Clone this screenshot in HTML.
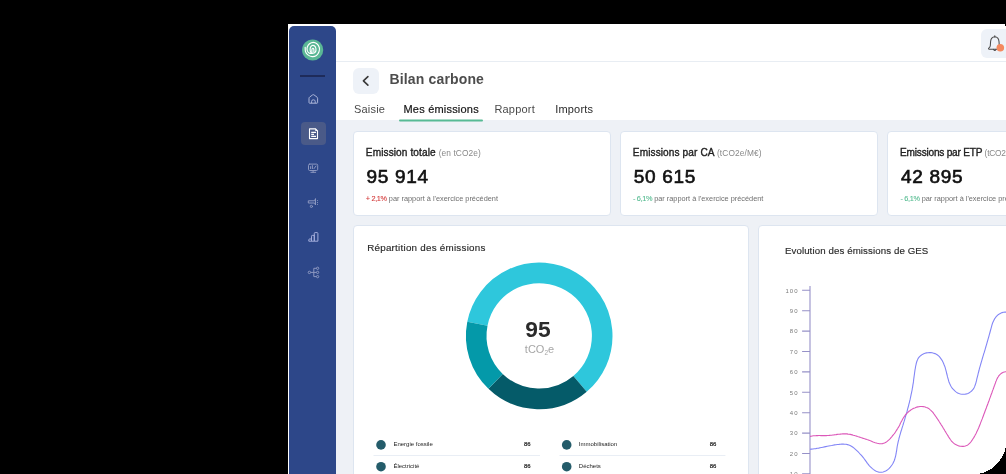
<!DOCTYPE html>
<html><head><meta charset="utf-8">
<style>
*{margin:0;padding:0;box-sizing:border-box}
html,body{width:1006px;height:474px;overflow:hidden;background:#000;font-family:"Liberation Sans",sans-serif;position:relative}
.a{position:absolute}
.t{position:absolute;white-space:nowrap;line-height:1}
#panel{left:288px;top:24px;width:718px;height:450px;background:#fff}
#sidebar{left:289px;top:26px;width:47px;height:470px;background:#2d4789;border-radius:5px}
#content{left:336px;top:120px;width:670px;height:354px;background:#eef1f6}
#topline{left:336px;top:61px;width:670px;height:1px;background:#e8edf3}
.card{position:absolute;background:#fff;border:1px solid #dde5f0;border-radius:4px}

.tab{font-size:11px;color:#4a4a4a;letter-spacing:0.2px}
.ct{font-size:10.1px;color:#222;letter-spacing:0.1px;-webkit-text-stroke:0.35px #222}
.cu{font-size:8.35px;color:#888;-webkit-text-stroke:0}
.num{font-size:19px;color:#111;letter-spacing:0.7px;-webkit-text-stroke:0.65px #111}
.sub{font-size:7.35px;color:#6e6e6e}
.lg{font-size:6px;color:#1e1e1e}
.ax{font-size:6px;color:#7a7a7a;letter-spacing:1px;text-align:right;width:20px}
</style></head><body><div style="position:absolute;left:0;top:0;width:1006px;height:474px;will-change:transform">
<div id="panel" class="a"></div>
<div id="sidebar" class="a"></div>
<div id="topline" class="a"></div>
<div id="content" class="a"></div>

<!-- sidebar icons -->
<svg class="a" style="left:288px;top:24px" width="50" height="270" viewBox="288 24 50 270">
  <circle cx="312.65" cy="50" r="10.6" fill="#5ab795"/>
  <g fill="none" stroke="#fff" stroke-width="1.15" stroke-linecap="round">
    <path d="M305.2 47.3C305.2 48.0 305.1 50.4 305.5 51.7C305.9 53.0 306.8 54.1 307.9 54.9C309.0 55.7 310.7 56.5 312.1 56.6C313.5 56.7 315.2 56.3 316.4 55.5C317.5 54.7 318.5 53.0 319.0 51.7C319.5 50.4 319.7 48.8 319.3 47.5C318.9 46.2 317.9 44.6 316.9 43.8C315.9 42.9 314.4 42.4 313.2 42.4C312.0 42.4 310.5 43.0 309.5 43.8C308.5 44.6 307.7 45.9 307.3 47.0C306.9 48.1 307.0 49.7 307.3 50.7C307.6 51.7 308.2 52.5 309.0 52.9C309.8 53.3 311.1 53.5 312.1 53.4C313.2 53.3 314.7 53.0 315.3 52.2C315.9 51.4 316.1 49.6 315.9 48.5C315.7 47.4 314.9 46.3 314.3 45.8C313.7 45.3 312.8 45.2 312.1 45.5C311.5 45.8 310.7 46.6 310.4 47.5C310.1 48.4 310.1 49.9 310.2 50.7C310.3 51.6 311.0 52.3 311.2 52.6"/>
    <path d="M311.9 52.5C311.9 52.0 311.8 50.2 311.9 49.5C312.0 48.8 312.5 48.2 312.8 48.2C313.1 48.2 313.6 48.6 313.8 49.2C314.0 49.8 313.9 51.4 313.9 51.8"/>
  </g>
  <rect x="300" y="75" width="25" height="2" fill="#1e2b5a"/>
  <!-- home -->
  <g fill="none" stroke="#aab4d8" stroke-width="1" stroke-linejoin="round">
    <path d="M309 102.6 V98.2 Q309 97.6 309.6 97.1 L312.6 94.9 Q313.3 94.4 314 94.9 L317 97.1 Q317.6 97.6 317.6 98.2 V102.6 Q317.6 103.2 317 103.2 H309.6 Q309 103.2 309 102.6 Z"/>
    <path d="M311.6 103.2 V101.3 Q311.6 99.8 313.4 99.8 Q315.2 99.8 315.2 101.3 V103.2"/>
  </g>
  <!-- doc highlight -->
  <rect x="301" y="122" width="25" height="23" rx="4" fill="#4a5a88"/>
  <g fill="none" stroke="#fff" stroke-width="1.1" stroke-linejoin="round">
    <path d="M309.5 128.9 H315.6 L317.5 130.8 V138.6 H309.5 Z"/>
    <path d="M311.2 132.4 H316 M311.2 134.4 H314 M311.2 136.4 H316"/>
  </g>
  <path d="M315.3 128.6 L317.8 131.1 H315.3 Z" fill="#fff"/>
  <!-- monitor -->
  <g fill="none" stroke="#8c98c0" stroke-width="1" stroke-linejoin="round" stroke-linecap="round">
    <rect x="308.5" y="164.1" width="9.2" height="6.4" rx="1.2"/>
    <path d="M313.1 170.5 V172.3 M310.9 172.3 H315.7"/>
    <path d="M310.6 168.6 V166.6 M312.4 168.6 V165.6 M314 168.6 L316 166"/>
  </g>
  <!-- megaphone -->
  <g fill="none" stroke="#8c98c0" stroke-width="1" stroke-linejoin="round" stroke-linecap="round">
    <path d="M308.7 200.8 H314.6 L315.5 198.6 V205 L314.6 203 H308.7 Z"/>
    <circle cx="311.4" cy="206.4" r="1.1"/>
    <path d="M317.5 200.6 V200.7 M317.5 202.5 V202.6 M317.5 204.3 V204.4"/>
  </g>
  <!-- chart -->
  <g fill="none" stroke="#a3addb" stroke-width="1" stroke-linejoin="round">
    <path d="M308.8 241.2 V239.8 Q308.8 239 309.6 239 H311.5 V241.2 Z M311.5 241.2 V236.2 Q311.5 235.4 312.3 235.4 H314.3 V241.2 Z M314.3 241.2 V233.4 Q314.3 232.6 315.1 232.6 H317.1 Q317.9 232.6 317.9 233.4 V241.2 Z"/>
  </g>
  <!-- hierarchy -->
  <g fill="none" stroke="#8c98c0" stroke-width="1">
    <circle cx="309.4" cy="272.4" r="1.2"/>
    <circle cx="317.6" cy="268.3" r="1.15"/>
    <circle cx="317.6" cy="272.4" r="1.15"/>
    <circle cx="317.6" cy="276.6" r="1.15"/>
    <path d="M310.6 272.4 H316.4 M313.8 268.3 V276.6 M313.8 268.3 H316.4 M313.8 276.6 H316.4"/>
  </g>
</svg>

<!-- bell button -->
<div class="a" style="left:981px;top:29px;width:32px;height:28.5px;background:#eef2f8;border-radius:6px"></div>
<svg class="a" style="left:980px;top:30px" width="26" height="26" viewBox="980 30 26 26">
  <g fill="none" stroke="#4a4a4a" stroke-width="1.05" stroke-linejoin="round" stroke-linecap="round">
    <path d="M994.8 36.8 C992.2 37 990.8 39 990.6 41.5 L990.3 45.8 C990.2 46.9 989.6 47.6 988.8 48.1 C988.3 48.5 988.5 49.2 989.2 49.2 L1000.4 49.2 C1001.1 49.2 1001.3 48.5 1000.8 48.1 C1000 47.6 999.4 46.9 999.3 45.8 L999 41.5 C998.8 39 997.4 37 994.8 36.8 Z"/>
    <path d="M993.6 49.4 Q994.8 51.6 996 49.4"/>
    <path d="M994.8 35.7 V36.8"/>
  </g>
  <circle cx="1000.3" cy="47.7" r="3.8" fill="#f4895f"/>
</svg>

<!-- header -->
<div class="a" style="left:353px;top:68px;width:25.5px;height:25.5px;background:#eef2f8;border-radius:6px"></div>
<svg class="a" style="left:353px;top:68px" width="26" height="26" viewBox="353 68 26 26">
  <path d="M367.9 76.6 L363.4 80.8 L367.9 85.1" fill="none" stroke="#383838" stroke-width="1.6" stroke-linecap="round" stroke-linejoin="round"/>
</svg>
<div class="t" style="left:389.5px;top:72.4px;font-size:14px;font-weight:bold;color:#4d4d4d;letter-spacing:0.15px">Bilan carbone</div>
<div class="t tab" style="left:354px;top:103.9px">Saisie</div>
<div class="t tab" style="left:403.5px;top:103.9px;color:#151515;-webkit-text-stroke:0.2px #151515">Mes émissions</div>
<div class="t tab" style="left:494.4px;top:103.9px">Rapport</div>
<div class="t tab" style="left:555.2px;top:103.9px;color:#2a2a2a">Imports</div>
<svg class="a" style="left:396px;top:116px" width="90" height="8" viewBox="396 116 90 8"><rect x="399" y="119.6" width="84" height="2" rx="1" fill="#57ba94"/></svg>

<!-- KPI cards -->
<div class="card" style="left:353px;top:131px;width:257.5px;height:84.5px"></div>
<div class="card" style="left:620px;top:131px;width:258px;height:84.5px"></div>
<div class="card" style="left:887px;top:131px;width:258px;height:84.5px"></div>

<div class="t ct" style="left:365.8px;top:148px">Emission totale <span class="cu">(en tCO2e)</span></div>
<div class="t num" style="left:366.5px;top:166.8px">95 914</div>
<div class="t sub" style="left:365.8px;top:195.3px"><span style="color:#d43a3a;letter-spacing:-0.35px;-webkit-text-stroke:0.1px #d43a3a">+ 2,1%</span> par rapport à l'exercice précédent</div>

<div class="t ct" style="left:632.8px;top:148px">Emissions par CA <span class="cu">(tCO2e/M€)</span></div>
<div class="t num" style="left:633.8px;top:166.8px">50 615</div>
<div class="t sub" style="left:633px;top:195.3px"><span style="color:#55bb90;letter-spacing:-0.35px;-webkit-text-stroke:0.1px #55bb90">- 6,1%</span> par rapport à l'exercice précédent</div>

<div class="t ct" style="left:900.1px;top:148px;letter-spacing:-0.22px">Emissions par ETP <span class="cu">(tCO2e/ETP)</span></div>
<div class="t num" style="left:901px;top:166.8px">42 895</div>
<div class="t sub" style="left:900.5px;top:195.3px"><span style="color:#55bb90;letter-spacing:-0.35px;-webkit-text-stroke:0.1px #55bb90">- 6,1%</span> par rapport à l'exercice précédent</div>

<!-- bottom panels -->
<div class="card" style="left:353px;top:225px;width:396px;height:260px"></div>
<div class="card" style="left:758px;top:225px;width:396px;height:260px"></div>

<div class="t" style="left:367.2px;top:243.3px;font-size:9.8px;letter-spacing:0.25px;color:#2a2a2a;-webkit-text-stroke:0.15px #2a2a2a">Répartition des émissions</div>

<svg class="a" style="left:0;top:0" width="1006" height="474" viewBox="0 0 1006 474">
  <g fill="none" stroke-width="20.6">
    <path d="M477.40 323.66A63 63 0 1 1 580.03 383.88" stroke="#2ec7dc"/>
    <path d="M580.03 383.88A63 63 0 0 1 495.59 381.37" stroke="#055b69"/>
    <path d="M495.59 381.37A63 63 0 0 1 477.40 323.66" stroke="#0499a9"/>
  </g>
</svg>
<div class="t" style="left:512px;top:318.3px;width:52px;text-align:center;font-size:22.8px;font-weight:bold;color:#2b2b2b">95</div>
<div class="t" style="left:509.5px;top:344.2px;width:60px;text-align:center;font-size:11px;color:#a6a6a6">tCO<sub style="font-size:6.5px;vertical-align:-1.5px">2</sub>e</div>

<!-- legend -->
<svg class="a" style="left:0;top:0" width="1006" height="474" viewBox="0 0 1006 474">
  <g fill="#245c6a">
    <circle cx="381" cy="444.9" r="4.8"/>
    <circle cx="381" cy="466.7" r="4.8"/>
    <circle cx="566.7" cy="444.9" r="4.8"/>
    <circle cx="566.7" cy="466.7" r="4.8"/>
  </g>
  <rect x="373.5" y="455" width="166.5" height="1" fill="#e9eef5"/>
  <rect x="559.4" y="455" width="166" height="1" fill="#e9eef5"/>
</svg>
<div class="t lg" style="left:393.4px;top:441.1px">Energie fossile</div>
<div class="t lg" style="left:524px;top:441.1px;-webkit-text-stroke:0.2px #222">86</div>
<div class="t lg" style="left:393.4px;top:462.9px">Électricité</div>
<div class="t lg" style="left:524px;top:462.9px;-webkit-text-stroke:0.2px #222">86</div>
<div class="t lg" style="left:578.8px;top:441.1px">Immobilisation</div>
<div class="t lg" style="left:709.7px;top:441.1px;-webkit-text-stroke:0.2px #222">86</div>
<div class="t lg" style="left:578.8px;top:462.9px">Déchets</div>
<div class="t lg" style="left:709.7px;top:462.9px;-webkit-text-stroke:0.2px #222">86</div>

<!-- line chart -->
<div class="t" style="left:784.9px;top:246.1px;font-size:9.7px;letter-spacing:0.1px;color:#2a2a2a;-webkit-text-stroke:0.15px #2a2a2a">Evolution des émissions de GES</div>
<svg class="a" style="left:0;top:0" width="1006" height="474" viewBox="0 0 1006 474">
  <g stroke="#9691c8" stroke-width="1.1" fill="none">
    <path d="M810 286 L810 474"/>
    <path d="M802.1 290.3 H810 M802.1 310.7 H810 M802.1 331.1 H810 M802.1 351.5 H810 M802.1 371.9 H810 M802.1 392.3 H810 M802.1 412.7 H810 M802.1 433.1 H810 M802.1 453.5 H810 M802.1 473.9 H810"/>
  </g>
  <path id="blue" d="M810.0 449.3 L811.5 449.1 L812.9 449.0 L814.3 448.8 L815.8 448.6 L817.2 448.3 L818.7 448.1 L820.1 447.8 L821.5 447.5 L823.0 447.2 L824.4 446.9 L825.8 446.6 L827.3 446.3 L828.7 446.0 L830.1 445.7 L831.6 445.5 L833.0 445.2 L834.5 444.9 L835.9 444.7 L837.4 444.5 L838.9 444.4 L840.3 444.2 L841.8 444.1 L843.2 444.1 L844.7 444.2 L846.1 444.3 L847.5 444.6 L848.8 445.0 L850.1 445.5 L851.4 446.2 L852.6 447.0 L853.8 447.9 L854.9 448.9 L856.0 449.9 L857.1 450.9 L858.2 451.9 L859.2 453.0 L860.2 454.1 L861.2 455.1 L862.1 456.2 L863.1 457.4 L864.0 458.5 L864.8 459.7 L865.7 460.9 L866.6 462.1 L867.4 463.3 L868.3 464.4 L869.2 465.6 L870.2 466.7 L871.3 467.7 L872.4 468.7 L873.6 469.6 L874.9 470.5 L876.2 471.2 L877.6 471.7 L879.0 472.1 L880.4 472.3 L881.8 472.3 L883.1 472.0 L884.4 471.6 L885.7 471.0 L886.9 470.3 L888.1 469.4 L889.2 468.4 L890.3 467.2 L891.2 466.0 L892.1 464.8 L892.9 463.5 L893.6 462.1 L894.2 460.7 L894.7 459.3 L895.1 457.9 L895.5 456.5 L895.8 455.1 L896.1 453.7 L896.3 452.2 L896.6 450.8 L896.8 449.3 L897.0 447.9 L897.2 446.5 L897.5 445.0 L897.8 443.6 L898.1 442.2 L898.4 440.8 L898.8 439.4 L899.1 438.0 L899.5 436.6 L899.9 435.2 L900.3 433.8 L900.7 432.4 L901.1 431.0 L901.6 429.6 L902.0 428.2 L902.4 426.8 L902.9 425.4 L903.3 424.0 L903.7 422.6 L904.2 421.2 L904.6 419.8 L905.0 418.3 L905.4 416.9 L905.8 415.5 L906.3 414.1 L906.7 412.7 L907.1 411.3 L907.4 409.9 L907.8 408.4 L908.2 407.0 L908.6 405.6 L908.9 404.2 L909.3 402.8 L909.6 401.3 L910.0 399.9 L910.3 398.5 L910.6 397.1 L910.9 395.6 L911.2 394.2 L911.5 392.8 L911.8 391.4 L912.1 390.0 L912.3 388.5 L912.6 387.1 L912.8 385.7 L913.0 384.3 L913.3 382.8 L913.5 381.4 L913.6 380.0 L913.8 378.6 L914.0 377.2 L914.2 375.7 L914.4 374.3 L914.6 372.8 L914.8 371.4 L915.0 369.9 L915.3 368.5 L915.5 367.0 L915.8 365.5 L916.2 364.0 L916.5 362.5 L917.0 361.0 L917.6 359.6 L918.2 358.3 L919.1 357.1 L920.1 356.1 L921.2 355.2 L922.4 354.4 L923.7 353.8 L925.0 353.3 L926.4 352.9 L927.9 352.7 L929.3 352.6 L930.8 352.6 L932.2 352.8 L933.6 353.2 L935.0 353.6 L936.3 354.3 L937.5 355.0 L938.6 355.9 L939.6 356.9 L940.5 358.1 L941.4 359.3 L942.2 360.6 L942.9 361.9 L943.5 363.3 L944.1 364.8 L944.7 366.2 L945.2 367.7 L945.6 369.2 L946.0 370.6 L946.4 372.1 L946.7 373.5 L947.1 375.0 L947.4 376.4 L947.8 377.8 L948.2 379.2 L948.6 380.6 L949.0 382.0 L949.5 383.3 L950.1 384.5 L950.7 385.8 L951.4 387.0 L952.2 388.1 L953.1 389.2 L954.1 390.2 L955.1 391.2 L956.3 392.1 L957.6 392.9 L959.0 393.5 L960.4 394.0 L961.9 394.2 L963.4 394.3 L965.0 394.2 L966.5 393.9 L967.9 393.4 L969.3 392.7 L970.5 391.9 L971.6 391.0 L972.6 390.0 L973.4 388.9 L974.1 387.7 L974.7 386.4 L975.2 385.0 L975.7 383.6 L976.1 382.2 L976.5 380.7 L976.8 379.2 L977.1 377.8 L977.5 376.3 L977.9 374.8 L978.2 373.4 L978.6 372.0 L979.0 370.5 L979.3 369.1 L979.7 367.7 L980.1 366.3 L980.5 364.9 L980.9 363.5 L981.3 362.2 L981.7 360.8 L982.1 359.4 L982.5 358.0 L982.9 356.6 L983.3 355.3 L983.7 353.9 L984.2 352.5 L984.6 351.2 L985.0 349.8 L985.4 348.4 L985.8 347.0 L986.2 345.7 L986.6 344.3 L987.0 342.9 L987.4 341.5 L987.8 340.1 L988.2 338.7 L988.6 337.3 L989.0 335.8 L989.4 334.4 L989.8 333.0 L990.2 331.5 L990.6 330.0 L991.0 328.6 L991.4 327.1 L991.8 325.6 L992.2 324.2 L992.7 322.8 L993.3 321.5 L993.9 320.2 L994.6 318.9 L995.4 317.8 L996.2 316.7 L997.2 315.6 L998.2 314.7 L999.4 313.9 L1000.7 313.2 L1002.1 312.6 L1003.5 312.3 L1005.0 312.1 L1006.5 312.1 L1008.0 312.3" fill="none" stroke="#8386f6" stroke-width="1.1"/>
  <path id="pink" d="M810.0 436.4 L811.1 436.2 L812.2 436.0 L813.3 435.8 L814.4 435.7 L815.5 435.7 L816.5 435.6 L817.6 435.6 L818.7 435.5 L819.8 435.5 L820.9 435.6 L822.0 435.6 L823.0 435.6 L824.1 435.6 L825.2 435.6 L826.3 435.6 L827.4 435.5 L828.5 435.5 L829.6 435.4 L830.7 435.3 L831.7 435.2 L832.8 435.0 L833.9 434.9 L835.0 434.7 L836.1 434.6 L837.2 434.4 L838.3 434.3 L839.4 434.2 L840.5 434.1 L841.6 434.0 L842.7 433.9 L843.8 433.9 L844.8 433.8 L845.9 433.9 L847.0 433.9 L848.0 434.1 L849.1 434.2 L850.2 434.4 L851.2 434.6 L852.3 434.9 L853.3 435.2 L854.4 435.5 L855.4 435.8 L856.5 436.1 L857.5 436.5 L858.5 436.8 L859.6 437.1 L860.6 437.5 L861.6 437.8 L862.6 438.1 L863.7 438.4 L864.7 438.8 L865.7 439.1 L866.8 439.5 L867.8 439.8 L868.9 440.2 L869.9 440.6 L871.0 441.0 L872.0 441.4 L873.1 441.9 L874.1 442.3 L875.2 442.7 L876.3 443.0 L877.3 443.3 L878.4 443.5 L879.4 443.7 L880.5 443.7 L881.5 443.7 L882.5 443.6 L883.5 443.3 L884.5 443.0 L885.4 442.6 L886.3 442.0 L887.2 441.4 L888.0 440.7 L888.9 439.9 L889.7 439.1 L890.4 438.3 L891.2 437.4 L891.9 436.6 L892.6 435.7 L893.3 434.8 L894.0 434.0 L894.7 433.1 L895.3 432.2 L895.9 431.3 L896.5 430.4 L897.1 429.4 L897.7 428.5 L898.2 427.6 L898.8 426.6 L899.3 425.7 L899.8 424.7 L900.2 423.7 L900.7 422.8 L901.2 421.8 L901.7 420.9 L902.2 419.9 L902.7 419.0 L903.3 418.0 L903.9 417.1 L904.5 416.2 L905.1 415.3 L905.8 414.5 L906.6 413.7 L907.4 412.9 L908.2 412.1 L909.0 411.3 L909.9 410.7 L910.8 410.0 L911.8 409.4 L912.8 408.8 L913.7 408.3 L914.8 407.9 L915.8 407.5 L916.8 407.1 L917.9 406.9 L918.9 406.7 L920.0 406.5 L921.0 406.5 L922.1 406.5 L923.1 406.6 L924.2 406.8 L925.2 407.0 L926.2 407.4 L927.3 407.8 L928.2 408.3 L929.2 408.9 L930.0 409.6 L930.9 410.3 L931.6 411.1 L932.4 411.9 L933.1 412.7 L933.7 413.6 L934.4 414.5 L935.0 415.4 L935.7 416.3 L936.3 417.2 L936.9 418.1 L937.5 419.0 L938.1 419.9 L938.7 420.8 L939.3 421.8 L939.9 422.7 L940.5 423.6 L941.0 424.5 L941.6 425.4 L942.2 426.3 L942.8 427.3 L943.3 428.2 L943.9 429.1 L944.5 430.0 L945.0 431.0 L945.6 431.9 L946.1 432.8 L946.7 433.8 L947.3 434.7 L947.9 435.6 L948.4 436.6 L949.0 437.5 L949.6 438.4 L950.2 439.3 L950.9 440.2 L951.5 441.1 L952.3 441.9 L953.1 442.7 L953.9 443.4 L954.8 444.0 L955.7 444.6 L956.7 445.1 L957.8 445.6 L958.8 445.9 L959.9 446.2 L961.0 446.3 L962.2 446.4 L963.3 446.4 L964.3 446.2 L965.4 446.0 L966.4 445.6 L967.3 445.2 L968.2 444.6 L969.0 443.9 L969.8 443.2 L970.5 442.4 L971.2 441.5 L971.8 440.6 L972.4 439.7 L973.0 438.8 L973.6 437.9 L974.2 436.9 L974.7 436.0 L975.2 435.0 L975.8 434.0 L976.3 433.0 L976.7 432.1 L977.2 431.1 L977.7 430.1 L978.1 429.1 L978.6 428.0 L979.0 427.0 L979.4 426.0 L979.8 425.0 L980.2 424.0 L980.6 422.9 L981.0 421.9 L981.4 420.9 L981.8 419.9 L982.2 418.9 L982.6 417.8 L983.0 416.8 L983.4 415.8 L983.7 414.8 L984.1 413.8 L984.5 412.8 L984.9 411.8 L985.2 410.7 L985.6 409.7 L986.0 408.7 L986.4 407.7 L986.7 406.7 L987.1 405.7 L987.5 404.7 L987.9 403.7 L988.2 402.7 L988.6 401.7 L989.0 400.7 L989.4 399.6 L989.7 398.6 L990.1 397.6 L990.5 396.6 L990.8 395.6 L991.2 394.5 L991.6 393.5 L992.0 392.5 L992.3 391.4 L992.7 390.4 L993.1 389.4 L993.5 388.3 L993.8 387.3 L994.2 386.2 L994.6 385.2 L995.0 384.1 L995.4 383.0 L995.7 382.0 L996.2 380.9 L996.6 379.9 L997.0 378.9 L997.5 377.9 L998.1 377.0 L998.6 376.1 L999.2 375.3 L999.9 374.6 L1000.7 373.9 L1001.5 373.3 L1002.4 372.7 L1003.3 372.3 L1004.4 372.0 L1005.5 371.8 L1006.8 371.7 L1008.1 371.7" fill="none" stroke="#dc58b9" stroke-width="1.1"/>
</svg>
<div class="t ax" style="left:778.5px;top:287.5px">100</div>
<div class="t ax" style="left:778.5px;top:307.9px">90</div>
<div class="t ax" style="left:778.5px;top:328.3px">80</div>
<div class="t ax" style="left:778.5px;top:348.7px">70</div>
<div class="t ax" style="left:778.5px;top:369.1px">60</div>
<div class="t ax" style="left:778.5px;top:389.5px">50</div>
<div class="t ax" style="left:778.5px;top:409.9px">40</div>
<div class="t ax" style="left:778.5px;top:430.3px">30</div>
<div class="t ax" style="left:778.5px;top:450.7px">20</div>
<div class="t ax" style="left:778.5px;top:471.1px">10</div>

<svg id="corner" class="a" style="left:0;top:0" width="1006" height="474" viewBox="0 0 1006 474" shape-rendering="crispEdges"><path d="M980 474V473H981V473H982V473H983V473H984V472H985V472H986V471H987V471H988V470H989V470H990V469H991V469H992V468H993V467H994V466H995V465H996V464H997V463H998V462H999V461H1000V459H1001V458H1002V456H1003V454H1004V452H1005V448H1006V474Z" fill="#000"/><rect x="1005" y="24" width="1" height="2" fill="#000"/></svg>

</div></body></html>
